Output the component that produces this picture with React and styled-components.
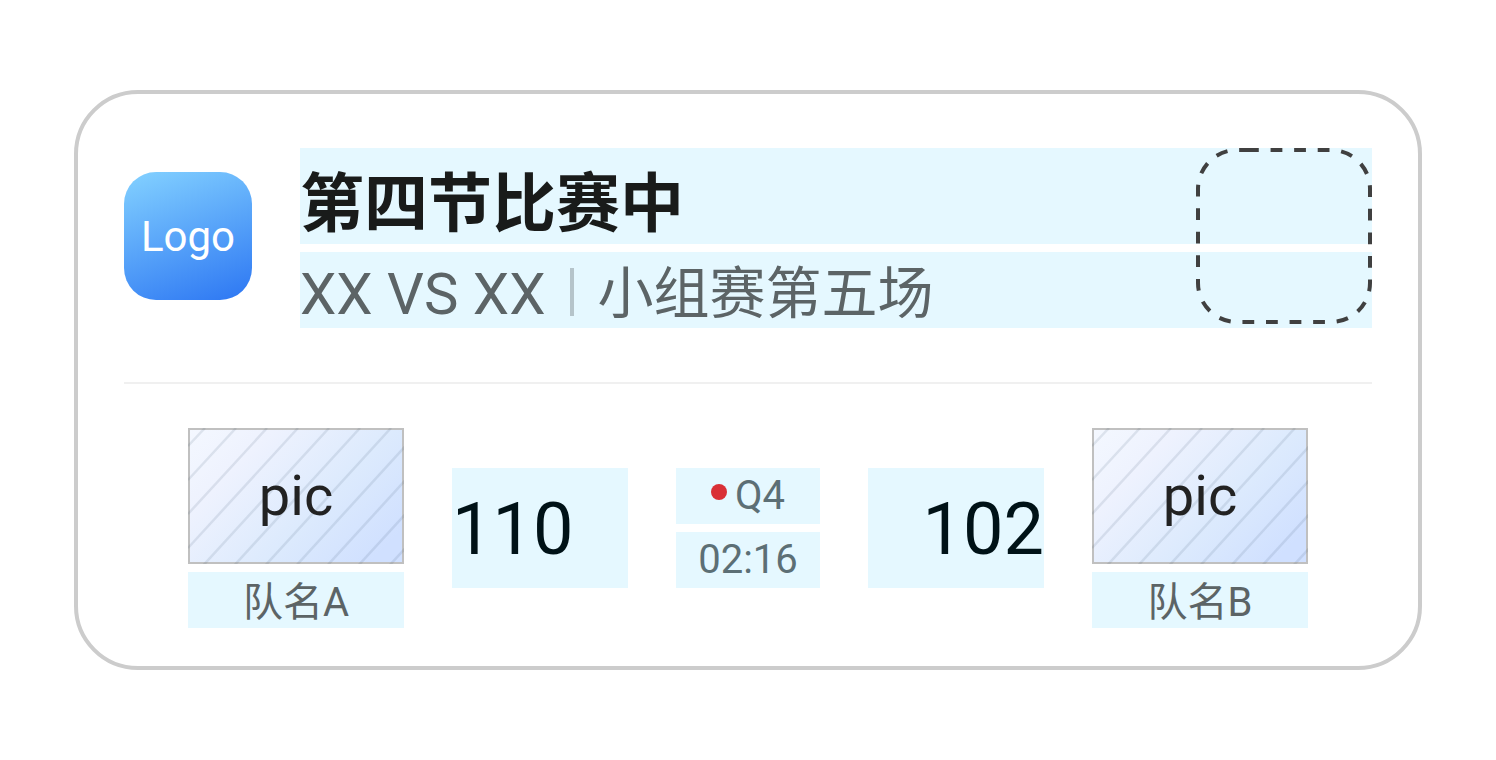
import React from "react";
import styled, { createGlobalStyle } from "styled-components";

const GlobalStyle = createGlobalStyle`
  *, *::before, *::after { box-sizing: border-box; }
  body {
    margin: 0;
    background: #fff;
    font-family: Roboto, "Noto Sans CJK SC", sans-serif;
  }
  h1, p, figure { margin: 0; }
`;

const Page = styled.main`
  padding: 90px 74px;
`;

const Card = styled.article`
  padding: 54px 46px 38px;
  border: 4px solid #ccc;
  border-radius: 64px;
  background: #fff;
`;

const Header = styled.header`
  display: flex;
  align-items: center;
  gap: 48px;
  padding-bottom: 54px;
  border-bottom: 2px solid #f0f0f0;
`;

const Logo = styled.div`
  display: grid;
  place-items: center;
  flex: none;
  width: 128px;
  height: 128px;
  margin-bottom: 4px;
  border-radius: 32px;
  background: linear-gradient(160deg, #80ceff 4%, #2e78f3 98%);
  color: #fff;
  font-size: 42px;
`;

const Heading = styled.div`
  position: relative;
  display: flex;
  flex: 1;
  flex-direction: column;
  gap: 8px;
  min-width: 0;
`;

const Title = styled.h1`
  padding-top: 4px;
  background: #e5f8ff;
  color: #191b1a;
  font-family: "Noto Sans CJK SC", sans-serif;
  font-size: 64px;
  font-weight: 700;
  line-height: 92px;
`;

const Subtitle = styled.p`
  display: flex;
  align-items: center;
  gap: 24px;
  padding-top: 8px;
  background: #e5f8ff;
  color: #5c6466;
  font-size: 56px;
  line-height: 68px;
  white-space: nowrap;
`;

const Matchup = styled.span`
  font-size: 58px;
`;

const Separator = styled.span`
  width: 4px;
  height: 48px;
  margin-bottom: 4px;
  background: #b5c4ca;
`;

const Slot = styled.svg`
  position: absolute;
  top: 0;
  right: 0;
  width: 176px;
  height: 176px;
`;

const Scoreboard = styled.section`
  display: flex;
  align-items: center;
  justify-content: space-between;
  gap: 48px;
  padding: 44px 64px 0;
`;

const TeamBox = styled.figure`
  display: flex;
  flex-direction: column;
  gap: 8px;
  width: 216px;
`;

const Picture = styled.div`
  position: relative;
  display: grid;
  place-items: center;
  height: 136px;
  background: linear-gradient(
    135deg,
    #f4f8ff 0%,
    #eef2fe 25%,
    #dceafd 60%,
    #d0e0ff 90%
  );
  color: #222;
  font-size: 56px;
`;

const Hatch = styled.svg`
  position: absolute;
  inset: 0;
  width: 100%;
  height: 100%;
`;

const PictureLabel = styled.span`
  position: relative;
`;

const TeamName = styled.figcaption`
  padding-top: 6px;
  background: #e5f8ff;
  color: #5c6466;
  font-size: 40px;
  line-height: 50px;
  text-align: center;
`;

const Score = styled.output`
  width: 176px;
  padding-top: 4px;
  background: #e5f8ff;
  color: #001217;
  font-size: 72px;
  line-height: 116px;
  text-align: ${({ $align }) => $align};
`;

const Clock = styled.div`
  display: flex;
  flex-direction: column;
  gap: 8px;
  width: 144px;
`;

const ClockRow = styled.div`
  display: flex;
  align-items: center;
  justify-content: center;
  gap: 8px;
  background: #e5f8ff;
  color: #5c6f75;
  font-size: 40px;
  line-height: 56px;
`;

const LiveDot = styled.span`
  width: 16px;
  height: 16px;
  margin-bottom: 8px;
  border-radius: 50%;
  background: #d93036;
`;

const hatchLines = Array.from({ length: 11 }, (_, i) => ({
  x: 17 + 31 * i,
  y: 18 + 34 * i,
}));

const Team = ({ name }) => (
  <TeamBox>
    <Picture>
      <Hatch viewBox="0 0 216 136" aria-hidden="true">
        <rect
          x="1"
          y="1"
          width="214"
          height="134"
          fill="none"
          stroke="#c0c0c0"
          strokeWidth="2"
        />
        {hatchLines.map(({ x, y }) => (
          <line
            key={x}
            x1={x}
            y1="0"
            x2="0"
            y2={y}
            stroke="#3c506e"
            strokeOpacity="0.12"
            strokeWidth="2.5"
          />
        ))}
      </Hatch>
      <PictureLabel>pic</PictureLabel>
    </Picture>
    <TeamName>{name}</TeamName>
  </TeamBox>
);

export default function App() {
  return (
    <>
      <GlobalStyle />
      <Page>
        <Card>
          <Header>
            <Logo>Logo</Logo>
            <Heading>
              <Title>第四节比赛中</Title>
              <Subtitle>
                <Matchup>XX VS XX</Matchup>
                <Separator />
                <span>小组赛第五场</span>
              </Subtitle>
              <Slot viewBox="0 0 176 176" aria-hidden="true">
                <path
                  d="M51 2H135A39 39 0 0 1 174 41V135A39 39 0 0 1 135 174H41A39 39 0 0 1 2 135V41A39 39 0 0 1 41 2H51"
                  pathLength="632"
                  fill="none"
                  stroke="#404040"
                  strokeWidth="4"
                  strokeDasharray="12 12"
                />
              </Slot>
            </Heading>
          </Header>
          <Scoreboard>
            <Team name="队名A" />
            <Score $align="left">110</Score>
            <Clock>
              <ClockRow>
                <LiveDot />
                <span>Q4</span>
              </ClockRow>
              <ClockRow>
                <time>02:16</time>
              </ClockRow>
            </Clock>
            <Score $align="right">102</Score>
            <Team name="队名B" />
          </Scoreboard>
        </Card>
      </Page>
    </>
  );
}
